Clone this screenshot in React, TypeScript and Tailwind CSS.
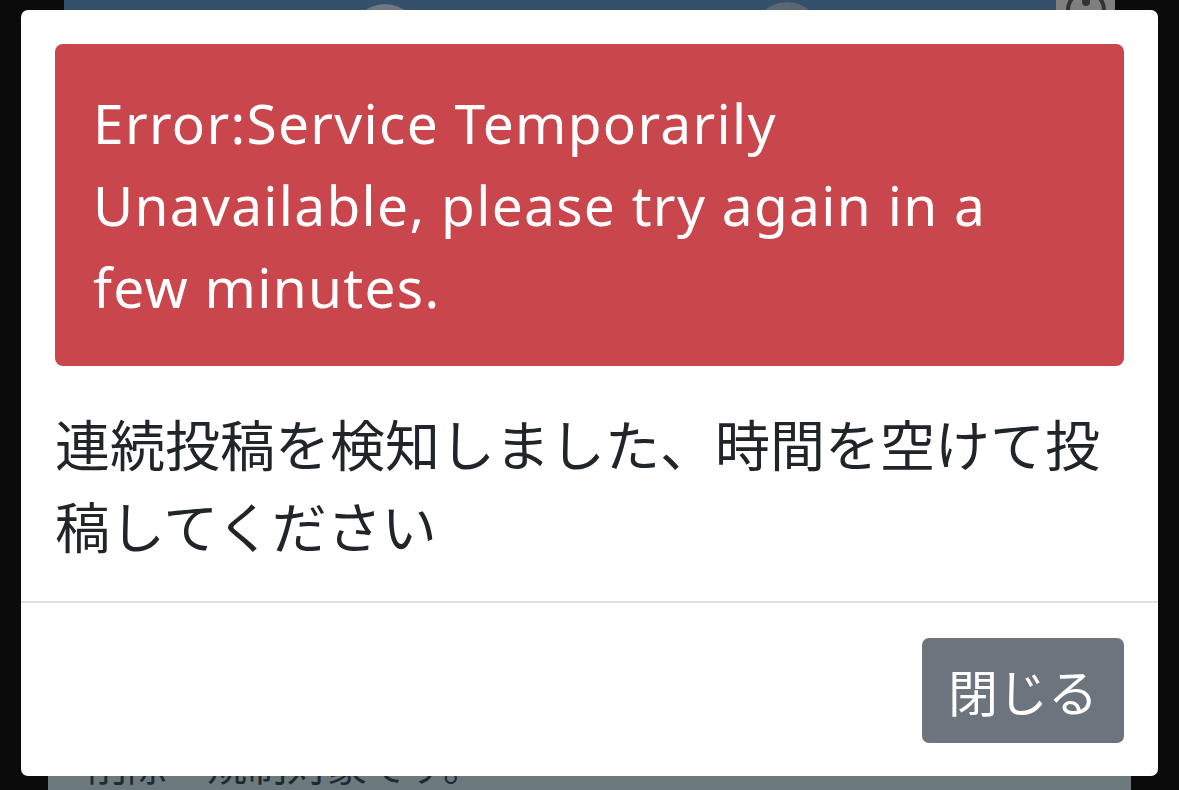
import React from "react";

export default function App() {
  return (
    <div className="relative w-[1179px] h-[790px] overflow-hidden bg-[#0b0b0b]">
      {/* dimmed page behind the modal */}
      <div className="flex h-full flex-col">
        <div className="flex h-[60px] px-[64px]">
          <div className="relative flex-1 overflow-hidden bg-[#34506a]">
            <div className="absolute left-[286px] top-[4px] h-[70px] w-[70px] rounded-full bg-[#6f7780]" />
            <div className="absolute left-[688px] top-[2px] h-[70px] w-[70px] rounded-full bg-[#5c6670]" />
          </div>
          <div className="flex w-[59px] items-start justify-center bg-[#7f7f7f]">
            <svg width="44" height="44" viewBox="0 0 44 44" className="-mt-[12px]">
              <circle cx="22" cy="22" r="18" fill="none" stroke="#333" strokeWidth="4" />
              <circle cx="22" cy="14" r="4" fill="#333" />
            </svg>
          </div>
        </div>
        <div className="flex-1" />
        <div className="mx-[48px] flex h-[80px] items-end bg-[#6c7a7e] pb-[2px] pl-[39px]">
          <span
            className="text-[40px] leading-[48px] text-[#1f2a30]"
            style={{ fontFamily: '"Noto Sans CJK JP", sans-serif' }}
          >
            削除・規制対象です。
          </span>
        </div>
      </div>

      {/* modal */}
      <div
        className="absolute left-[21px] top-[10px] w-[1137px] overflow-hidden rounded-[7px] bg-white"
        style={{ fontFamily: '"Noto Sans", "Noto Sans CJK JP", sans-serif' }}
      >
        <div className="px-[34px] pt-[34px] pb-[36px]">
          <div className="rounded-[8px] bg-[#c8464c] px-[38px] py-[38px] text-[55px] leading-[82px] tracking-[1.3px] text-white">
            Error:Service Temporarily
            <br />
            Unavailable, please try again in a
            <br />
            few minutes.
          </div>
          <p
            className="mt-[35px] text-[55px] leading-[82px] text-[#212529]"
            style={{ fontFamily: '"Noto Sans CJK JP", sans-serif' }}
          >
            連続投稿を検知しました、時間を空けて投稿してください
          </p>
        </div>
        <div className="flex justify-end border-t-2 border-[#dee2e6] px-[34px] pt-[35px] pb-[33px]">
          <button
            className="flex h-[105px] w-[202px] items-center justify-center rounded-[7px] bg-[#6c757d] text-[50px] leading-[75px] text-white"
            style={{ fontFamily: '"Noto Sans CJK JP", sans-serif' }}
          >
            閉じる
          </button>
        </div>
      </div>
    </div>
  );
}
